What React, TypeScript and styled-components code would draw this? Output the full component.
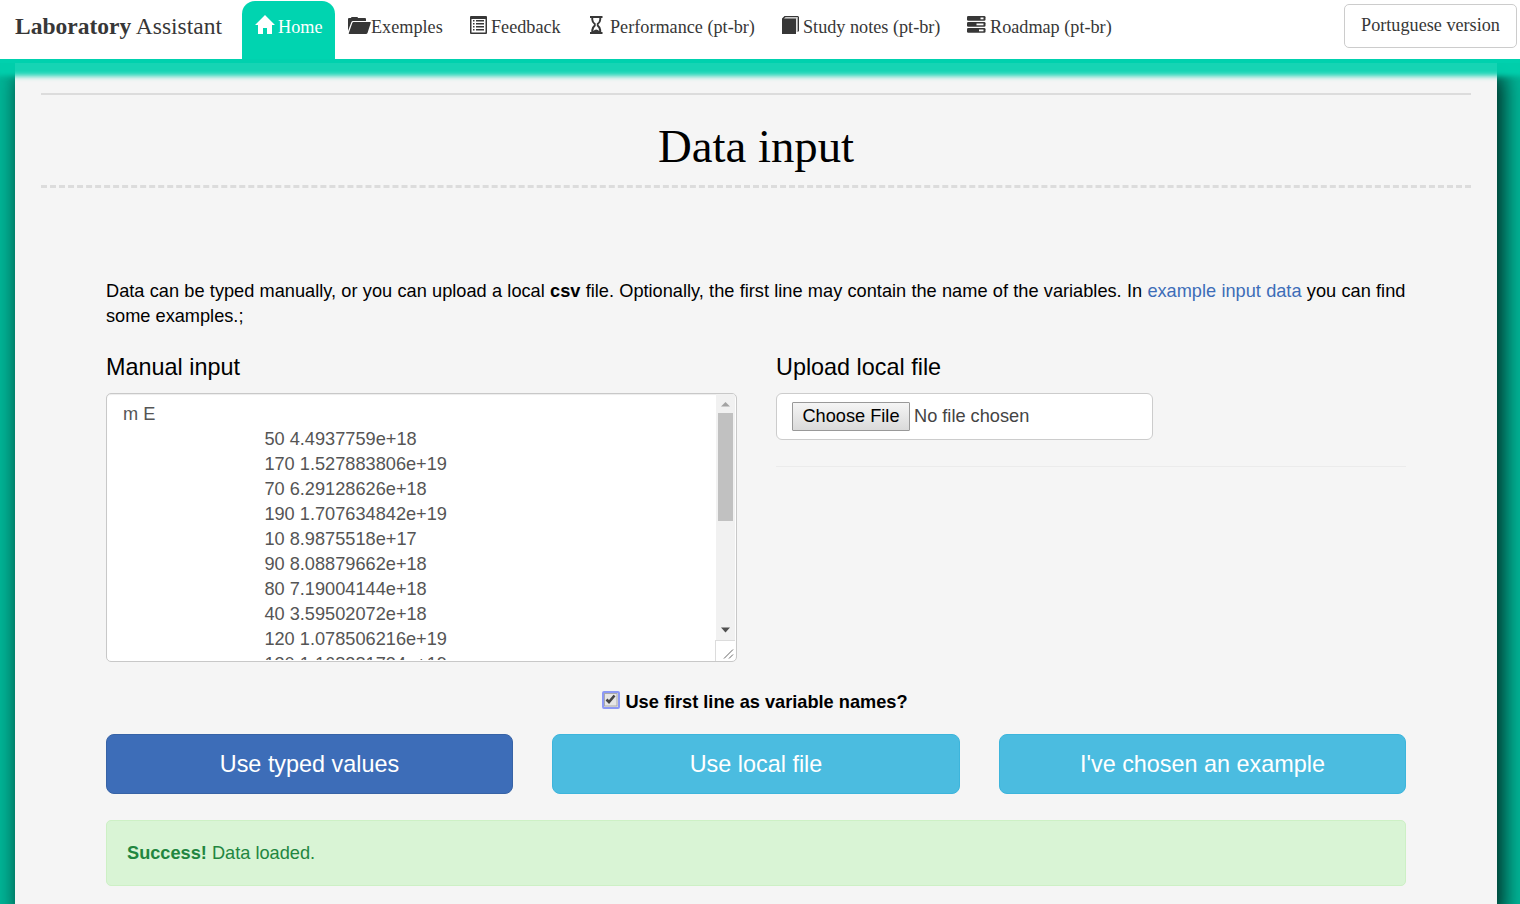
import React from "react";
import styled, { createGlobalStyle } from "styled-components";

const Global = createGlobalStyle`
  * { box-sizing: border-box; }
  html, body, #root { height: 100%; }
  body {
    margin: 0;
    overflow: hidden;
    background: #00b698;
    color: #000;
    font: 18.2px/25px "Liberation Sans", Arial, sans-serif;
  }
`;

const Navbar = styled.nav`
  position: relative;
  z-index: 2;
  display: flex;
  align-items: flex-start;
  height: 63px;
  padding-left: 15px;
  background: #fff;
  border-bottom: 4px solid #00d1ae;
  box-shadow: 0 8px 5px 5px rgba(0, 209, 174, 0.91);
  font-family: "Liberation Serif", "Times New Roman", serif;
  color: #373737;
`;

const Brand = styled.div`
  width: 227px;
  padding-top: 14px;
  font-size: 23.5px;
`;

const NavItem = styled.a<{ $active?: boolean; $w: number; $gap?: number }>`
  display: flex;
  align-items: flex-start;
  gap: ${(p) => p.$gap ?? 3}px;
  width: ${(p) => p.$w}px;
  height: 58px;
  margin-top: 1px;
  padding: 14px 0 0 13px;
  border-radius: 13px 13px 0 0;
  background: ${(p) => (p.$active ? "#00d4b0" : "transparent")};
  color: ${(p) => (p.$active ? "#fff" : "#373737")};
  white-space: nowrap;

  svg { flex: none; }
`;

const Language = styled.button`
  width: 173px;
  height: 44px;
  margin: 4px 3px 0 auto;
  padding: 0 0 2px;
  border: 1px solid #ccc;
  border-radius: 5px;
  background: #fff;
  color: #373737;
  font: inherit;
`;

const Page = styled.main`
  width: 1482px;
  height: 841px;
  margin-left: 15px;
  padding: 30px 26px 0;
  background: #f5f5f5;
  box-shadow: 5px 13px 20px 2px #002b24;
`;

const Heading = styled.h1`
  height: 95px;
  margin: 0;
  padding-top: 25px;
  border-top: 2px solid #dcdcdc;
  border-bottom: 3px dashed #dcdcdc;
  text-align: center;
  font: 400 46.8px/52px "Liberation Serif", "Times New Roman", serif;
`;

const Content = styled.div`
  width: 1300px;
  margin: 91px 0 0 65px;
`;

const Intro = styled.p`
  width: 1299.4px;
  margin: 0;
  text-align: justify;
  a { color: #3d6db8; text-decoration: none; }
`;

const Columns = styled.div`
  display: grid;
  grid-template-columns: 631px 630px;
  column-gap: 39px;
  margin-top: 24px;
`;

const SubHeading = styled.h3`
  margin: 0 0 12px;
  font-size: 23.4px;
  font-weight: 400;
  line-height: 28px;
`;

const Area = styled.div`
  display: flex;
  height: 269px;
  padding-right: 1px;
  border: 1px solid #c8c8c8;
  border-radius: 5px;
  background: #fff;
  box-shadow: inset 0 1px 1px rgba(0, 0, 0, 0.075);
  overflow: hidden;
`;

const Values = styled.pre`
  flex: 1;
  height: 266px;
  margin: 0;
  padding: 8px 0 0 16px;
  overflow: hidden;
  color: #555;
  font: inherit;
`;

const Row = styled.span<{ $indent?: boolean }>`
  display: block;
  padding-left: ${(p) => (p.$indent ? 141.4 : 0)}px;
`;

const Scroll = styled.div`
  display: flex;
  flex-direction: column;
  align-items: flex-end;
  width: 20px;
  svg { display: block; }
`;

const Track = styled.div`
  width: 19px;
  height: 246px;
  padding: 7px 2px 0;
  background: #f1f1f1;
`;

const Thumb = styled.div`
  height: 108px;
  margin: 6px 0 106px;
  background: #c1c1c1;
`;

const Grip = styled.div`
  width: 20px;
  height: 21px;
  border: solid #dcdcdc;
  border-width: 1px 0 0 1px;
`;

const FileBox = styled.div`
  display: flex;
  align-items: flex-start;
  gap: 4px;
  width: 377px;
  height: 47px;
  padding: 8px 15px;
  border: 1px solid #ccc;
  border-radius: 6px;
  background: #fff;
  color: #444;
  line-height: 28px;
`;

const Choose = styled.button`
  width: 118px;
  height: 29px;
  padding: 0 0 1px;
  border: 1px solid #999;
  border-radius: 1px;
  background: linear-gradient(#f5f5f5, #dadada);
  color: #000;
  font: inherit;
  line-height: 26px;
`;

const Rule = styled.hr`
  margin: 26px 0 0;
  border: 0;
  border-top: 1px solid #ebebeb;
`;

const Option = styled.label`
  display: flex;
  justify-content: center;
  gap: 5px;
  margin-top: 28px;
  padding-right: 2px;
  font-weight: 700;
  svg { margin-top: 1px; }
`;

const Buttons = styled.div`
  display: grid;
  grid-template-columns: 407px 408px 407px;
  column-gap: 39px;
  margin-top: 19px;
`;

const Action = styled.button<{ $primary?: boolean }>`
  height: 60px;
  padding: 0;
  border: 1px solid ${(p) => (p.$primary ? "#3763a6" : "#3db5dc")};
  border-radius: 8px;
  background: ${(p) => (p.$primary ? "#3d6db8" : "#4bbce0")};
  color: #fff;
  font: inherit;
  font-size: 23.4px;
`;

const Alert = styled.div`
  height: 66px;
  margin-top: 26px;
  padding: 20px 20px 0;
  border: 1px solid #cdf0c5;
  border-radius: 5px;
  background: #d9f4d5;
  color: #22863f;
`;

const HomeIcon = () => (
  <svg width="20" height="20" viewBox="0 0 20 20" fill="currentColor">
    <path d="M10 0 20 10H17V19H12V13H8V19H3V10H0Z" />
  </svg>
);
const FolderIcon = () => (
  <svg width="23" height="20" viewBox="0 0 23 20" fill="currentColor">
    <path d="M0 4Q0 3 1 3H3Q3 2 4 2H9Q10 2 10 3H17Q18 3 18 4V6H5Q3.8 6 3.3 7.3L0 16Z" />
    <path d="M5.5 7H22.2Q23 7 22.7 8L19.5 18Q19 19 18 19H1.5Q.3 19 .8 18L4.3 8Q4.6 7 5.5 7Z" />
  </svg>
);
const ListIcon = () => (
  <svg width="18" height="20" viewBox="0 0 18 20" fill="currentColor">
    <path fillRule="evenodd" d="M1 1H16Q17 1 17 2V18Q17 19 16 19H1Q0 19 0 18V2Q0 1 1 1ZM1.5 4V17.5H15.5V4Z" />
    <path d="M3 5H4.5V6.5H3ZM6 5H14V6.5H6ZM3 8H4.5V9.5H3ZM6 8H14V9.5H6ZM3 11H4.5V12.5H3ZM6 11H14V12.5H6ZM3 14H4.5V15.5H3ZM6 14H14V15.5H6Z" />
  </svg>
);
const HourglassIcon = () => (
  <svg width="13" height="20" viewBox="0 0 13 20" fill="currentColor">
    <path fillRule="evenodd" d="M0 1H12.5V3H11.2V4.5Q11.2 7.5 8.3 9.7Q11.2 12 11.2 15V17H12.5V19H0V17H1.3V15Q1.3 12 4.2 9.7Q1.3 7.5 1.3 4.5V3H0ZM3.2 3V4.5Q3.2 6.5 5.7 8.5V11Q3.2 13 3.2 16Q6.2 13 9.3 16Q9.3 13 6.8 11V8.5Q9.3 6.5 9.3 4.5V3Z" />
  </svg>
);
const BookIcon = () => (
  <svg width="18" height="20" viewBox="0 0 18 20">
    <path fill="#c9c9c9" d="M3 1.5H16V17H14.5V3.5H2Z" />
    <path fill="currentColor" d="M2.5 1H16L17 2V16L15.8 17V2H3.5L2 3.5H14V19H0V3.5Z" />
  </svg>
);
const TasksIcon = () => (
  <svg width="19" height="20" viewBox="0 0 19 20">
    {[[1, 13.5, 3], [7, 9.5, 7], [13, 12, 4.5]].map(([y, x, w]) => (
      <g key={y}>
        <rect y={y} width="18.5" height="4.8" rx="1.3" fill="currentColor" />
        <rect x={x} y={y + 1.5} width={w} height="1.8" fill="#fff" />
      </g>
    ))}
  </svg>
);

const samples = [
  "50 4.4937759e+18",
  "170 1.527883806e+19",
  "70 6.29128626e+18",
  "190 1.707634842e+19",
  "10 8.9875518e+17",
  "90 8.08879662e+18",
  "80 7.19004144e+18",
  "40 3.59502072e+18",
  "120 1.078506216e+19",
  "130 1.168381734e+19",
];

export default function App() {
  return (
    <>
      <Global />
      <Navbar>
        <Brand><b>Laboratory</b> Assistant</Brand>
        <NavItem $active $w={93}><HomeIcon />Home</NavItem>
        <NavItem $w={122} $gap={0}><FolderIcon />Exemples</NavItem>
        <NavItem $w={120}><ListIcon />Feedback</NavItem>
        <NavItem $w={192} $gap={7}><HourglassIcon />Performance (pt-br)</NavItem>
        <NavItem $w={185}><BookIcon />Study notes (pt-br)</NavItem>
        <NavItem $w={180} $gap={4}><TasksIcon />Roadmap (pt-br)</NavItem>
        <Language>Portuguese version</Language>
      </Navbar>
      <Page>
        <Heading>Data input</Heading>
        <Content>
          <Intro>
            Data can be typed manually, or you can upload a local <b>csv</b> file. Optionally, the first line may
            contain the name of the variables. In <a>example input data</a> you can find some examples.;
          </Intro>
          <Columns>
            <section>
              <SubHeading>Manual input</SubHeading>
              <Area>
                <Values>
                  <Row>m E</Row>
                  {samples.map((s) => <Row $indent key={s}>{s}</Row>)}
                </Values>
                <Scroll>
                  <Track>
                    <svg width="15" height="6"><path d="M3 5.5 7.5 1 12 5.5Z" fill="#a3a3a3" /></svg>
                    <Thumb />
                    <svg width="15" height="6"><path d="M3 .5H12L7.5 5.5Z" fill="#505050" /></svg>
                  </Track>
                  <Grip>
                    <svg width="19" height="20"><path d="M8 17.5 17 8.5M13 17.5 17 13.5" stroke="#666" /></svg>
                  </Grip>
                </Scroll>
              </Area>
            </section>
            <section>
              <SubHeading>Upload local file</SubHeading>
              <FileBox><Choose>Choose File</Choose>No file chosen</FileBox>
              <Rule />
            </section>
          </Columns>
          <Option>
            <svg width="18" height="18" viewBox="0 0 18 18">
              <rect x="1" y="1" width="16" height="16" rx="1" fill="#e8e8e8" stroke="#8c99f5" strokeWidth="2" />
              <rect x="2.5" y="2.5" width="12.5" height="12.5" fill="#e6e6e6" stroke="#aaa" />
              <path d="M4.5 8.5 7 11 12.5 4.5" fill="none" stroke="#444" strokeWidth="2.6" />
            </svg>
            Use first line as variable names?
          </Option>
          <Buttons>
            <Action $primary>Use typed values</Action>
            <Action>Use local file</Action>
            <Action>I've chosen an example</Action>
          </Buttons>
          <Alert><b>Success!</b> Data loaded.</Alert>
        </Content>
      </Page>
    </>
  );
}
